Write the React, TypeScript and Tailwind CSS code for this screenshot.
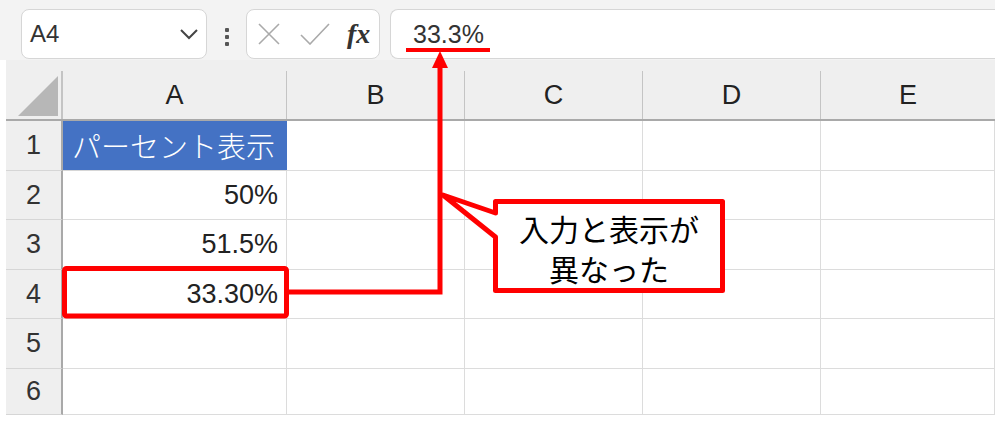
import type { ReactNode } from 'react'

const cols = ['A', 'B', 'C', 'D', 'E']
const rowHeights = ['h-[50px]', 'h-[49px]', 'h-[50px]', 'h-[49px]', 'h-[50px]', 'h-[46px]']

const cellValues: Record<number, ReactNode> = {
  2: '50%',
  3: '51.5%',
  4: '33.30%',
}

function NameBox() {
  return (
    <div className="flex items-center justify-between w-[186px] h-[50px] bg-white border border-[#d6d6d6] rounded-lg pl-[8px] pr-[7px]">
      <span className="text-[24px] text-[#333] leading-none">A4</span>
      <svg width="20" height="12" viewBox="0 0 20 12" fill="none" stroke="#444" strokeWidth="2">
        <path d="M2 2 L10 10 L18 2" />
      </svg>
    </div>
  )
}

function FormulaButtons() {
  return (
    <div className="flex items-center w-[134px] h-[50px] bg-white border border-[#d6d6d6] rounded-lg pl-[11px] gap-[20px]">
      <svg width="22" height="22" viewBox="0 0 22 22" stroke="#aaa" strokeWidth="1.6">
        <path d="M1 1 L21 21 M21 1 L1 21" />
      </svg>
      <svg width="30" height="22" viewBox="0 0 30 22" fill="none" stroke="#aaa" strokeWidth="1.6">
        <path d="M1 12 L10 21 L29 1" />
      </svg>
      <span className="text-[28px] italic font-bold text-[#333] leading-none font-['Liberation_Serif',serif] -ml-[3px]">
        fx
      </span>
    </div>
  )
}

function Toolbar() {
  return (
    <div className="flex items-start w-[995px] h-[60px] bg-[#f3f3f3] pt-[9px] pl-[21px]">
      <NameBox />
      <div className="flex flex-col items-center gap-[3px] w-[39px] pt-[19px]">
        <span className="w-[4px] h-[4px] rounded-[1px] bg-[#555]" />
        <span className="w-[4px] h-[4px] rounded-[1px] bg-[#555]" />
        <span className="w-[4px] h-[4px] rounded-[1px] bg-[#555]" />
      </div>
      <FormulaButtons />
      <div className="flex items-center flex-1 h-[50px] ml-[10px] bg-white border-y border-l border-[#d6d6d6] rounded-l-lg pl-[22px]">
        <span className="text-[25px] text-[#333] leading-none">33.3%</span>
      </div>
    </div>
  )
}

function HeaderRow() {
  return (
    <div className="grid grid-cols-[57px_224px_178px_178px_178px_174px] h-[61px] bg-[#efefef] border-b-2 border-[#a9a9a9]">
      <div className="flex items-end">
        <div className="flex-1 flex items-end justify-end pb-[3px] pr-[3px]">
          <svg width="40" height="40" viewBox="0 0 40 40">
            <polygon points="0,40 40,40 40,0" fill="#b7b7b7" />
          </svg>
        </div>
        <div className="w-[2px] h-[48px] bg-[#c4c4c4]" />
      </div>
      {cols.map((c) => (
        <div key={c} className="flex items-end">
          <div className="flex-1 h-full flex items-center justify-center pt-[12px] text-[27px] text-[#222] leading-none">
            {c}
          </div>
          {c !== 'E' && <div className="w-px h-[48px] bg-[#c4c4c4]" />}
        </div>
      ))}
    </div>
  )
}

function DataRow({ n, h }: { n: number; h: string }) {
  return (
    <div className={`grid grid-cols-[57px_224px_178px_178px_178px_174px] ${h}`}>
      <div className="flex items-center justify-center bg-[#efefef] border-r-2 border-b border-r-[#a9a9a9] border-b-[#d6d6d6] text-[27px] text-[#333] leading-none">
        {n}
      </div>
      {n === 1 ? (
        <div className="flex items-center pl-[9px] bg-[#4472c4] border-b border-[#d6d6d6] text-[29px] font-light text-white leading-none font-['Noto_Sans_CJK_JP',sans-serif]">
          パーセント表示
        </div>
      ) : (
        <div className="flex items-center justify-end pr-[8px] bg-white border-r border-b border-[#dcdcdc] text-[27px] text-[#222] leading-none">
          {cellValues[n]}
        </div>
      )}
      {cols.slice(1).map((c) => (
        <div key={c} className="bg-white border-r border-b border-[#dcdcdc]" />
      ))}
    </div>
  )
}

function Annotations() {
  return (
    <>
      <svg className="absolute inset-0 pointer-events-none" width="1000" height="421" viewBox="0 0 1000 421">
        {/* underline under the formula bar value */}
        <rect x="406" y="48" width="84" height="4" fill="#ff0000" />
        {/* arrow up to the formula bar */}
        <polygon points="440,51 432,68 448,68" fill="#ff0000" />
        <path d="M440 66 L440 292 L289 292" fill="none" stroke="#ff0000" strokeWidth="5" strokeLinejoin="miter" />
        {/* A4 highlight */}
        <rect x="64.5" y="268.5" width="222" height="47.5" rx="2" fill="none" stroke="#ff0000" strokeWidth="5" />
        {/* callout */}
        <path
          d="M495.5 213 L443 195 L495.5 237 L495.5 290.5 L722.5 290.5 L722.5 201.5 L495.5 201.5 Z"
          fill="white"
          stroke="#ff0000"
          strokeWidth="5"
          strokeLinejoin="round"
        />
      </svg>
      <div className="absolute left-[498px] top-[204px] w-[222px] h-[84px] flex flex-col items-center justify-center pt-[4px] text-[30px] leading-[40px] text-black font-['Noto_Sans_CJK_JP',sans-serif]">
        <span>入力と表示が</span>
        <span>異なった</span>
      </div>
    </>
  )
}

export default function App() {
  return (
    <div className="relative w-[1000px] h-[421px] bg-white overflow-hidden font-['Liberation_Sans','Noto_Sans_CJK_JP',sans-serif]">
      <Toolbar />
      <div className="w-[989px] ml-[6px]">
        <HeaderRow />
        {rowHeights.map((h, i) => (
          <DataRow key={i} n={i + 1} h={h} />
        ))}
      </div>
      <Annotations />
    </div>
  )
}
